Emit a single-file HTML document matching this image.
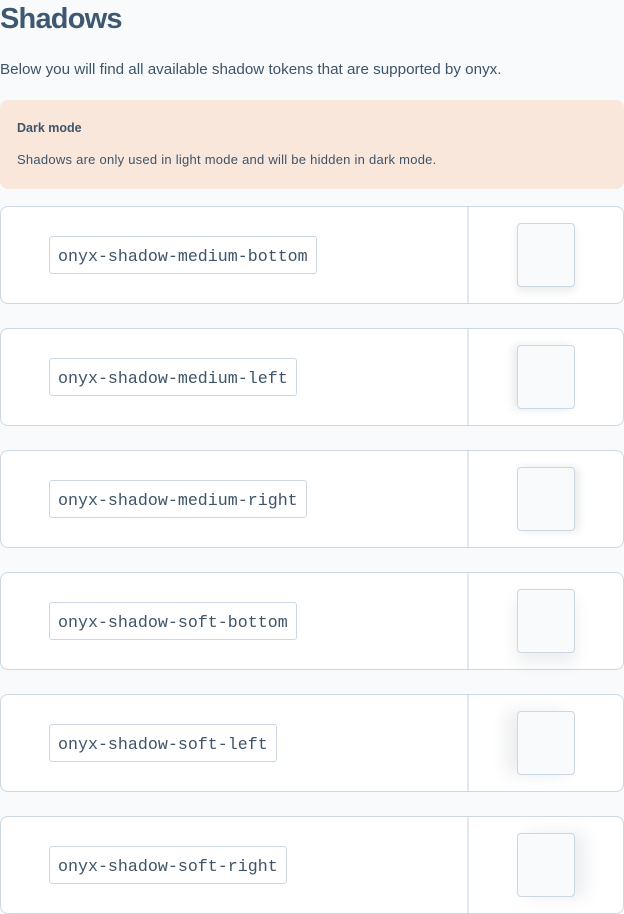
<!DOCTYPE html>
<html><head><style>
body{margin:0;background:#f8fafc;font-family:"Liberation Sans",sans-serif;color:#3e5468;width:624px;height:914px;overflow:hidden;position:relative}
h1{position:absolute;left:0;top:3px;margin:0;font-size:29px;font-weight:bold;color:#3d5870;letter-spacing:-0.8px}
.p{position:absolute;left:0;top:61px;font-size:15.2px;letter-spacing:0}
.note{position:absolute;left:0;top:100px;width:624px;height:89px;background:#f9e7dc;border-radius:8px}
.card{position:absolute;left:0;width:622px;height:96px;background:#fff;border:1px solid #cbd8e4;border-radius:8px}
.div{position:absolute;left:466px;top:0;width:2px;height:96px;background:#e2e8f0}
.code{position:absolute;left:48px;top:29px;height:36px;border:1px solid #cbd8e4;border-radius:3px;padding:0 8px;line-height:39px;font-family:"Liberation Mono",monospace;font-size:16.65px;color:#3e5468}
.sq{position:absolute;left:516px;top:16px;width:56px;height:62px;background:#f8fafc;border:1px solid #cbd8e4;border-radius:4px}
</style></head><body>
<h1>Shadows</h1>
<div class="p">Below you will find all available shadow tokens that are supported by onyx.</div>
<div class="note">
<div style="position:absolute;left:17px;top:21px;font-size:12.5px;font-weight:bold">Dark mode</div>
<div style="position:absolute;left:17px;top:52px;font-size:13px;letter-spacing:0.25px">Shadows are only used in light mode and will be hidden in dark mode.</div>
</div>
<div class="card" style="top:206px"><div class="div"></div><div class="code">onyx-shadow-medium-bottom</div><div class="sq" style="box-shadow:0 4px 8px rgba(60,80,100,.12)"></div></div>
<div class="card" style="top:328px"><div class="div"></div><div class="code">onyx-shadow-medium-left</div><div class="sq" style="box-shadow:-4px 0 8px rgba(60,80,100,.12)"></div></div>
<div class="card" style="top:450px"><div class="div"></div><div class="code">onyx-shadow-medium-right</div><div class="sq" style="box-shadow:4px 0 8px rgba(60,80,100,.12)"></div></div>
<div class="card" style="top:572px"><div class="div"></div><div class="code">onyx-shadow-soft-bottom</div><div class="sq" style="box-shadow:0 10px 16px rgba(60,80,100,.1)"></div></div>
<div class="card" style="top:694px"><div class="div"></div><div class="code">onyx-shadow-soft-left</div><div class="sq" style="box-shadow:-10px 0 16px rgba(60,80,100,.1)"></div></div>
<div class="card" style="top:816px"><div class="div"></div><div class="code">onyx-shadow-soft-right</div><div class="sq" style="box-shadow:10px 0 16px rgba(60,80,100,.1)"></div></div>
</body></html>
